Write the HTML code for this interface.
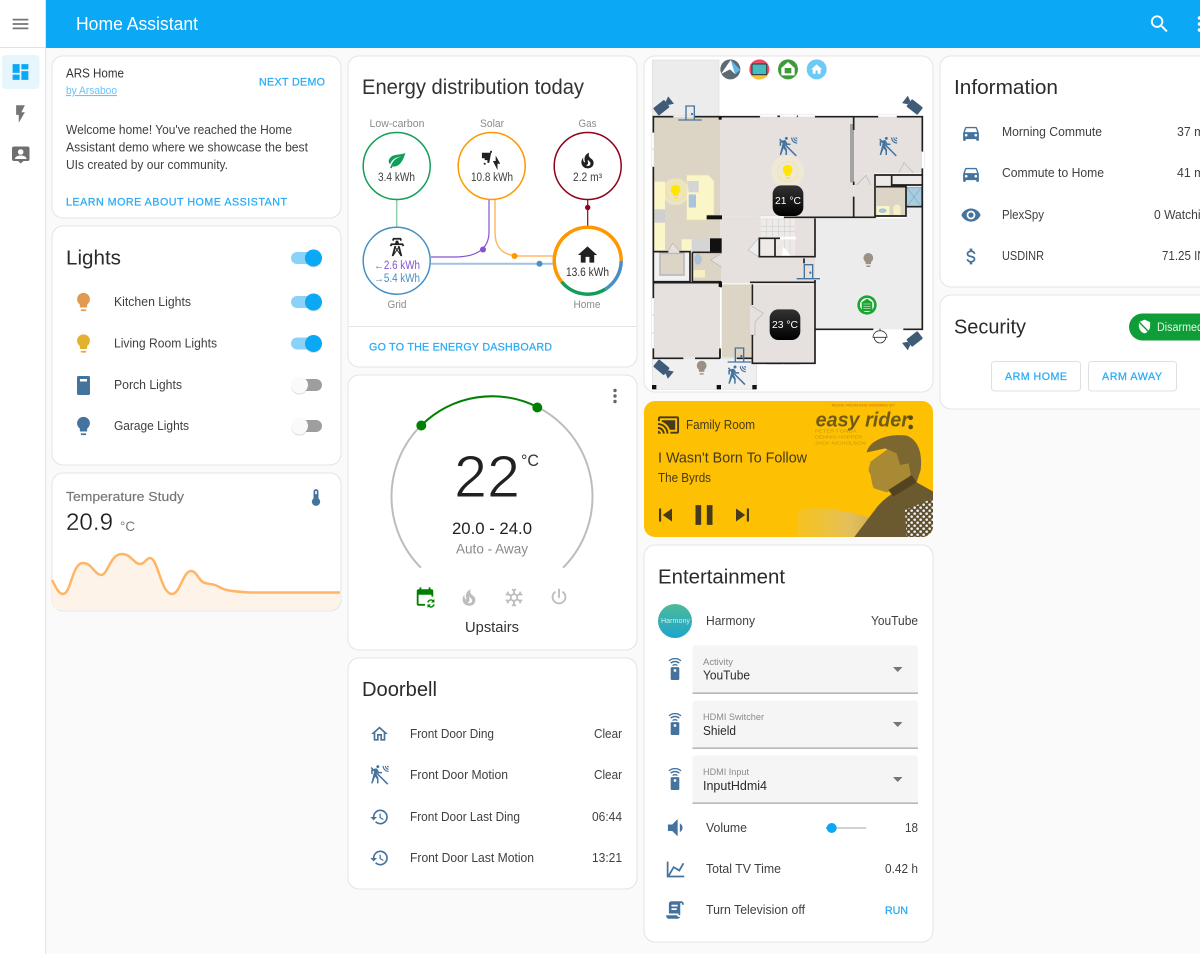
<!DOCTYPE html>
<html lang="en"><head><meta charset="utf-8"><title>Home Assistant</title>
<style>
html,body{margin:0;padding:0;background:#fafafa;width:1200px;height:954px;overflow:hidden}
svg{display:block}
text{font-family:"Liberation Sans",sans-serif;fill:#3f3f3f;font-size:13px;white-space:pre}
.t{font-size:20.5px;fill:#2b2b2b}
.b{fill:#29abf5;stroke:#29abf5;stroke-width:.25;font-size:10.7px}
.l{font-size:10.8px;fill:#8c8c8c}
.m{fill:#453a1c}
.c{fill:#fff;stroke:#e4e4e4;stroke-width:1}
</style></head><body>
<svg xmlns="http://www.w3.org/2000/svg" width="1200" height="954" viewBox="0 0 1200 954">
<defs>
<symbol id="menu" viewBox="0 0 24 24"><path d="M3,6H21V8H3V6M3,11H21V13H3V11M3,16H21V18H3V16Z"/></symbol>
<symbol id="search" viewBox="0 0 24 24"><path d="M9.5,3A6.5,6.5 0 0,1 16,9.5C16,11.11 15.41,12.59 14.44,13.73L14.71,14H15.5L20.5,19L19,20.5L14,15.5V14.71L13.73,14.44C12.59,15.41 11.11,16 9.5,16A6.5,6.5 0 0,1 3,9.5A6.5,6.5 0 0,1 9.5,3M9.5,5C7,5 5,7 5,9.5C5,12 7,14 9.5,14C12,14 14,12 14,9.5C14,7 12,5 9.5,5Z"/></symbol>
<symbol id="dash" viewBox="0 0 24 24"><path d="M13,3V9H21V3M13,21H21V11H13M3,21H11V15H3M3,13H11V3H3V13Z"/></symbol>
<symbol id="flash" viewBox="0 0 24 24"><path d="M7,2V13H10V22L17,10H13L17,2H7Z"/></symbol>
<symbol id="bulb" viewBox="0 0 24 24"><path d="M12,2A7,7 0 0,0 5,9C5,11.38 6.19,13.47 8,14.74V17A1,1 0 0,0 9,18H15A1,1 0 0,0 16,17V14.74C17.81,13.47 19,11.38 19,9A7,7 0 0,0 12,2M9,21A1,1 0 0,0 10,22H14A1,1 0 0,0 15,21V20H9V21Z"/></symbol>
<symbol id="home" viewBox="0 0 24 24"><path d="M10,20V14H14V20H19V12H22L12,3L2,12H5V20H10Z"/></symbol>
<symbol id="homeo" viewBox="0 0 24 24"><path d="M12 5.69L17 10.19V18H15V12H9V18H7V10.19L12 5.69M12 3L2 12H5V20H11V14H13V20H19V12H22L12 3Z"/></symbol>
<symbol id="car" viewBox="0 0 24 24"><path d="M5,11L6.5,6.5H17.5L19,11M17.5,16A1.5,1.5 0 0,1 16,14.5A1.5,1.5 0 0,1 17.5,13A1.5,1.5 0 0,1 19,14.5A1.5,1.5 0 0,1 17.5,16M6.5,16A1.5,1.5 0 0,1 5,14.5A1.5,1.5 0 0,1 6.5,13A1.5,1.5 0 0,1 8,14.5A1.5,1.5 0 0,1 6.5,16M18.92,6C18.72,5.42 18.16,5 17.5,5H6.5C5.84,5 5.28,5.42 5.08,6L3,12V20A1,1 0 0,0 4,21H5A1,1 0 0,0 6,20V19H18V20A1,1 0 0,0 19,21H20A1,1 0 0,0 21,20V12L18.92,6Z"/></symbol>
<symbol id="eye" viewBox="0 0 24 24"><path d="M12,9A3,3 0 0,0 9,12A3,3 0 0,0 12,15A3,3 0 0,0 15,12A3,3 0 0,0 12,9M12,17A5,5 0 0,1 7,12A5,5 0 0,1 12,7A5,5 0 0,1 17,12A5,5 0 0,1 12,17M12,4.5C7,4.5 2.73,7.61 1,12C2.73,16.39 7,19.5 12,19.5C17,19.5 21.27,16.39 23,12C21.27,7.61 17,4.5 12,4.5Z"/></symbol>
<symbol id="usd" viewBox="0 0 24 24"><path d="M7,15H9C9,16.08 10.37,17 12,17C13.63,17 15,16.08 15,15C15,13.9 13.96,13.5 11.76,12.97C9.64,12.44 7,11.78 7,9C7,7.21 8.47,5.69 10.5,5.18V3H13.5V5.18C15.53,5.69 17,7.21 17,9H15C15,7.92 13.63,7 12,7C10.37,7 9,7.92 9,9C9,10.1 10.04,10.5 12.24,11.03C14.36,11.56 17,12.22 17,15C17,16.79 15.53,18.31 13.5,18.82V21H10.5V18.82C8.47,18.31 7,16.79 7,15Z"/></symbol>
<symbol id="hist" viewBox="0 0 24 24"><path d="M13.5,8H12V13L16.28,15.54L17,14.33L13.5,12.25V8M13,3A9,9 0 0,0 4,12H1L4.96,16.03L9,12H6A7,7 0 0,1 13,5A7,7 0 0,1 20,12A7,7 0 0,1 13,19C11.07,19 9.32,18.21 8.06,16.94L6.64,18.36C8.27,20 10.5,21 13,21A9,9 0 0,0 22,12A9,9 0 0,0 13,3"/></symbol>
<symbol id="therm" viewBox="0 0 24 24"><path d="M15 13V5A3 3 0 0 0 9 5V13A5 5 0 1 0 15 13M12 4A1 1 0 0 1 13 5V8H11V5A1 1 0 0 1 12 4Z"/></symbol>
<symbol id="fire" viewBox="0 0 24 24"><path d="M17.66 11.2C17.43 10.9 17.15 10.64 16.89 10.38C16.22 9.78 15.46 9.35 14.82 8.72C13.33 7.26 13 4.85 13.95 3C13 3.23 12.17 3.75 11.46 4.32C8.87 6.4 7.85 10.07 9.07 13.22C9.11 13.32 9.15 13.42 9.15 13.55C9.15 13.77 9 13.97 8.8 14.05C8.57 14.15 8.33 14.09 8.14 13.93C8.08 13.88 8.04 13.83 8 13.76C6.87 12.33 6.69 10.28 7.45 8.64C5.78 10 4.87 12.3 5 14.47C5.06 14.97 5.12 15.47 5.29 15.97C5.43 16.57 5.7 17.17 6 17.7C7.08 19.43 8.95 20.67 10.96 20.92C13.1 21.19 15.39 20.8 17.03 19.32C18.86 17.66 19.5 15 18.56 12.72L18.43 12.46C18.22 12 17.66 11.2 17.66 11.2M14.5 17.5C14.22 17.74 13.76 18 13.4 18.1C12.28 18.5 11.16 17.94 10.5 17.28C11.69 17 12.4 16.12 12.61 15.23C12.78 14.43 12.46 13.77 12.33 13C12.21 12.26 12.23 11.63 12.5 10.94C12.69 11.32 12.89 11.7 13.13 12C13.9 13 15.11 13.44 15.37 14.8C15.41 14.94 15.43 15.08 15.43 15.23C15.46 16.05 15.1 16.95 14.5 17.5H14.5Z"/></symbol>
<symbol id="leaf" viewBox="0 0 24 24"><path d="M17,8C8,10 5.9,16.17 3.82,21.34L5.71,22L6.66,19.7C7.14,19.87 7.64,20 8,20C19,20 22,3 22,3C21,5 14,5.25 9,6.25C4,7.25 2,11.5 2,13.5C2,15.5 3.75,17.25 3.75,17.25C7,8 17,8 17,8Z"/></symbol>
<symbol id="power" viewBox="0 0 24 24"><path d="M16.56,5.44L15.11,6.89C16.84,7.94 18,9.83 18,12A6,6 0 0,1 12,18A6,6 0 0,1 6,12C6,9.83 7.16,7.94 8.88,6.88L7.44,5.44C5.36,6.88 4,9.28 4,12A8,8 0 0,0 12,20A8,8 0 0,0 20,12C20,9.28 18.64,6.88 16.56,5.44M13,3H11V13H13"/></symbol>
<symbol id="snow" viewBox="0 0 24 24"><path d="M20.79,13.95L18.46,14.57L16.46,13.44V10.56L18.46,9.43L20.79,10.05L21.31,8.12L19.54,7.65L20,5.88L18.07,5.36L17.45,7.69L15.45,8.82L13,7.38V5.12L14.71,3.41L13.29,2L12,3.29L10.71,2L9.29,3.41L11,5.12V7.38L8.5,8.82L6.5,7.69L5.92,5.36L4,5.88L4.47,7.65L2.7,8.12L3.22,10.05L5.55,9.43L7.55,10.56V13.45L5.55,14.58L3.22,13.96L2.7,15.89L4.47,16.36L4,18.12L5.93,18.64L6.55,16.31L8.55,15.18L11,16.62V18.88L9.29,20.59L10.71,22L12,20.71L13.29,22L14.7,20.59L13,18.88V16.62L15.5,15.17L17.5,16.3L18.12,18.63L20,18.12L19.53,16.35L21.3,15.88L20.79,13.95M9.5,10.56L12,9.11L14.5,10.56V13.44L12,14.89L9.5,13.44V10.56Z"/></symbol>
<symbol id="tower" viewBox="0 0 24 24"><path d="M8.28,5.45L6.5,4.55L7.76,2H16.23L17.5,4.55L15.72,5.44L15,4H9L8.28,5.45M18.62,8H14.09L13.3,5H10.7L9.91,8H5.38L4.1,10.55L5.89,11.44L6.62,10H17.38L18.1,11.45L19.89,10.56L18.62,8M17.77,22H15.7L15.46,21.1L12,15.9L8.53,21.1L8.3,22H6.23L9.12,11H11.19L10.83,12.35L12,14.1L13.16,12.35L12.81,11H14.88L17.77,22M11.4,15L10.5,13.65L9.32,18.13L11.4,15M14.68,18.12L13.5,13.64L12.6,15L14.68,18.12Z"/></symbol>
<symbol id="prev" viewBox="0 0 24 24"><path d="M6,18V6H8V18H6M9.5,12L18,6V18L9.5,12Z"/></symbol>
<symbol id="next" viewBox="0 0 24 24"><path d="M16,18H18V6H16M6,18L14.5,12L6,6V18Z"/></symbol>
<symbol id="pause" viewBox="0 0 24 24"><path d="M14,19H18V5H14M6,19H10V5H6V19Z"/></symbol>
<symbol id="cast" viewBox="0 0 24 24"><path d="M21,3H3C1.89,3 1,3.89 1,5V8H3V5H21V19H14V21H21A2,2 0 0,0 23,19V5C23,3.89 22.1,3 21,3M1,10V12A9,9 0 0,1 10,21H12C12,14.92 7.07,10 1,10M19,7H5V8.63C8.96,9.91 12.09,13.04 13.37,17H19M1,14V16A5,5 0 0,1 6,21H8A7,7 0 0,0 1,14M1,18V21H4A3,3 0 0,0 1,18Z"/></symbol>
<symbol id="vol" viewBox="0 0 24 24"><path d="M5,9V15H9L14,20V4L9,9M18.5,12C18.5,10.23 17.5,8.71 16,7.97V16C17.5,15.29 18.5,13.76 18.5,12Z"/></symbol>
<symbol id="chart" viewBox="0 0 24 24"><path d="M16,11.78L20.24,4.45L21.97,5.45L16.74,14.5L10.23,10.75L5.46,19H22V21H2V3H4V17.54L9.5,8L16,11.78Z"/></symbol>
<symbol id="script" viewBox="0 0 24 24"><path d="M17.8,20C17.4,21.2 16.3,22 15,22H5C3.3,22 2,20.7 2,19V18H5L14.2,18C14.6,19.2 15.7,20 17,20H17.8M19,2C20.7,2 22,3.3 22,5V6H20V5C20,4.4 19.6,4 19,4C18.4,4 18,4.4 18,5V18H17C16.4,18 16,17.6 16,17V16H5V5C5,3.3 6.3,2 8,2H19M8,6V8H15V6H8M8,10V12H14V10H8Z"/></symbol>
<symbol id="motion" viewBox="0 0 24 24"><path d="M10 .2C9 .2 8.2 1 8.2 2S9 3.8 10 3.8 11.8 3 11.8 2 11 .2 10 .2M15.67 1A7.33 7.33 0 0 0 23 8.33V7A6 6 0 0 1 17 1H15.67M18.33 1C18.33 3.58 20.42 5.67 23 5.67V4.33C21.16 4.33 19.67 2.84 19.67 1H18.33M21 1A2 2 0 0 0 23 3V1H21M7.92 4.03C7.75 4.03 7.58 4.06 7.42 4.11L2 5.8V11H3.8V7.33L5.91 6.67L2 22H3.8L6.67 13.89L9 17V22H10.8V15.59L8.31 11.05L9.04 8.18L10.12 10H15V8.2H11.38L9.38 4.87C9.08 4.37 8.54 4.03 7.92 4.03Z"/><path d="M1.3 3.7L2.6 2.4L22.6 22.4L21.3 23.7Z"/></symbol>
<symbol id="remote" viewBox="0 0 24 24"><rect x="7.500" y="9.500" width="9" height="13.500" rx="1.200"/><circle cx="12" cy="13" r="1.400" fill="#fff"/><path d="M9,7.400A4.500,4.500 0 0 1 15,7.400L14,8.400A3,3 0 0 0 10,8.400Z"/><path d="M7,4.800A7.500,7.500 0 0 1 17,4.800L16,5.900A6,6 0 0 0 8,5.900Z"/><path d="M5.300,2.500A10,10 0 0 1 18.700,2.500L17.700,3.500A8.500,8.500 0 0 0 6.300,3.500Z"/></symbol>
<symbol id="cal" viewBox="0 0 24 24"><path d="M19 3h-1V1h-2v2H8V1H6v2H5a2 2 0 0 0-2 2v14a2 2 0 0 0 2 2h7v-2H5V9h14v2h2V5a2 2 0 0 0-2-2z"/><path d="M14.500 17.500a4 4 0 0 1 6.600-2.600l1.200-1.200v3.800h-3.800l1.500-1.500a2.400 2.400 0 0 0-3.900 1.500zM22.500 19.500a4 4 0 0 1-6.600 2.600l-1.200 1.200v-3.800h3.800l-1.500 1.500a2.400 2.400 0 0 0 3.900-1.500z"/></symbol>
<symbol id="shield" viewBox="0 0 24 24"><path d="M12,1L3,5V11C3,16.55 6.84,21.74 12,23C17.16,21.74 21,16.55 21,11V5L12,1Z"/></symbol>
<symbol id="solar" viewBox="0 0 24 24"><path d="M1,3H11L9,14H7V11H4V9H1ZM12,1V3H10V1ZM3,14H5V16H3Z"/><path d="M17,7V13H14L19,23V16H22L17,7Z" transform="translate(-1 -1)"/></symbol>
<clipPath id="mc"><rect x="644" y="401" width="289" height="136" rx="11"/></clipPath>
<linearGradient id="hg" x1="0" y1="0" x2="0" y2="1"><stop offset="0" stop-color="#4dba98"/><stop offset="1" stop-color="#1ea5cf"/></linearGradient>
<linearGradient id="tg" x1="0" y1="0" x2="0" y2="1"><stop offset="0" stop-color="#333"/><stop offset="1" stop-color="#000"/></linearGradient>
<linearGradient id="sg" x1="0" y1="0" x2="1" y2="0"><stop offset="0" stop-color="#e9c650" stop-opacity=".35"/><stop offset=".6" stop-color="#e2bf5c"/><stop offset="1" stop-color="#c9a548"/></linearGradient>
<pattern id="dots" width="18" height="18" patternUnits="userSpaceOnUse"><rect width="18" height="18" fill="#5f5030"/><circle cx="5" cy="5" r="4" fill="#eee"/><circle cx="14" cy="14" r="4" fill="#eee"/></pattern>
<g id="door" fill="none" stroke="#44739e" stroke-width="4"><path d="M-35,0H35"/><path d="M-12,0V-42H13V0"/><circle cx="6" cy="-18" r="1.5" fill="#44739e"/></g>
<g id="camera" fill="#3f5b78"><rect x="-26" y="-14" width="42" height="28" rx="3"/><path d="M16,-6L32,-14V14L16,6Z"/></g>
</defs>

<rect width="1200" height="954" fill="#fafafa"/>
<!-- sidebar -->
<rect x="0" y="0" width="45" height="954" fill="#fff"/>
<rect x="45" y="0" width="1" height="954" fill="#e2e2e2"/>
<rect x="0" y="47" width="45" height="1" fill="#e2e2e2"/>
<use href="#menu" x="10" y="13" width="21" height="22" fill="#757575"/>
<rect x="2" y="55" width="37.500" height="34" rx="4" fill="#e7f5fd"/>
<use href="#dash" x="10" y="61.500" width="21" height="21" fill="#0ba8f5"/>
<use href="#flash" x="10" y="103.500" width="21" height="21" fill="#757575"/>
<path d="M14,146.500H27.500A2,2 0 0 1 29.500,148.500V159A2,2 0 0 1 27.500,161H23.500L20.700,163.500L18,161H14A2,2 0 0 1 12,159V148.500A2,2 0 0 1 14,146.500Z" fill="#6f6f6f"/>
<circle cx="20.700" cy="152" r="2.800" fill="#fff"/><path d="M15,159C15,156.500 18,155.500 20.700,155.500C23.500,155.500 26.500,156.500 26.500,159Z" fill="#fff"/>
<!-- header -->
<rect x="46" y="0" width="1154" height="48" fill="#0ba8f5"/>
<text x="76" y="30" lengthAdjust="spacingAndGlyphs" textLength="122" style="fill:#fff;font-size:18px">Home Assistant</text>
<use href="#search" x="1148" y="12.500" width="23" height="23" fill="#fff"/>
<circle cx="1199.500" cy="18" r="1.800" fill="#fff"/><circle cx="1199.500" cy="24" r="1.800" fill="#fff"/><circle cx="1199.500" cy="30" r="1.800" fill="#fff"/>

<!-- cards -->
<rect class="c" x="52" y="56" width="289" height="162" rx="11"/>
<rect class="c" x="52" y="226" width="289" height="239" rx="11"/>
<rect class="c" x="52" y="473" width="289" height="138" rx="11"/>
<rect class="c" x="348" y="56" width="289" height="311" rx="11"/>
<rect class="c" x="348" y="375" width="289" height="275" rx="11"/>
<rect class="c" x="348" y="658" width="289" height="231" rx="11"/>
<rect class="c" x="644" y="56" width="289" height="336" rx="11"/>
<rect class="c" x="644" y="545" width="289" height="397" rx="11"/>
<rect class="c" x="940" y="56" width="300" height="231" rx="11"/>
<rect class="c" x="940" y="295" width="300" height="114" rx="11"/>

<!-- demo card -->
<text x="66" y="77.500" lengthAdjust="spacingAndGlyphs" textLength="58" style="fill:#333">ARS Home</text>
<text x="66" y="94" lengthAdjust="spacingAndGlyphs" textLength="51" style="font-size:10.800px;fill:#6cc3f6;text-decoration:underline">by Arsaboo</text>
<text class="b" x="259" y="85.500" textLength="66">NEXT DEMO</text>
<text x="66" y="134" lengthAdjust="spacingAndGlyphs" textLength="226">Welcome home! You've reached the Home</text>
<text x="66" y="151.500" lengthAdjust="spacingAndGlyphs" textLength="242">Assistant demo where we showcase the best</text>
<text x="66" y="169" lengthAdjust="spacingAndGlyphs" textLength="162">UIs created by our community.</text>
<text class="b" x="66" y="205.500" textLength="221">LEARN MORE ABOUT HOME ASSISTANT</text>

<!-- lights -->
<text class="t" x="66" y="264.500" lengthAdjust="spacingAndGlyphs" textLength="55">Lights</text>
<g>
<rect x="291" y="252" width="30" height="12" rx="6" fill="#8bd2f9"/><circle cx="313.500" cy="259" r="8.500" fill="#000" opacity=".12"/><circle cx="313.500" cy="258" r="8.500" fill="#0ba8f5"/>
<rect x="291" y="296" width="30" height="12" rx="6" fill="#8bd2f9"/><circle cx="313.500" cy="303" r="8.500" fill="#000" opacity=".12"/><circle cx="313.500" cy="302" r="8.500" fill="#0ba8f5"/>
<rect x="291" y="337.500" width="30" height="12" rx="6" fill="#8bd2f9"/><circle cx="313.500" cy="344.500" r="8.500" fill="#000" opacity=".12"/><circle cx="313.500" cy="343.500" r="8.500" fill="#0ba8f5"/>
<rect x="292" y="379" width="30" height="12" rx="6" fill="#9e9e9e"/><circle cx="299.500" cy="386" r="8.500" fill="#000" opacity=".15"/><circle cx="299.500" cy="385" r="8.500" fill="#fafafa"/>
<rect x="292" y="420" width="30" height="12" rx="6" fill="#9e9e9e"/><circle cx="299.500" cy="427" r="8.500" fill="#000" opacity=".15"/><circle cx="299.500" cy="426" r="8.500" fill="#fafafa"/>
</g>
<use href="#bulb" x="72.500" y="291" width="22" height="22" fill="#e29a50"/>
<use href="#bulb" x="72.500" y="332.500" width="22" height="22" fill="#e3b12d"/>
<rect x="77" y="376" width="13" height="19" rx="1.500" fill="#44739e"/><rect x="80" y="379" width="7" height="2.500" fill="#fff"/>
<use href="#bulb" x="72.500" y="415" width="22" height="22" fill="#44739e"/>
<text x="114" y="306" lengthAdjust="spacingAndGlyphs" textLength="77">Kitchen Lights</text>
<text x="114" y="347.500" lengthAdjust="spacingAndGlyphs" textLength="103">Living Room Lights</text>
<text x="114" y="389" lengthAdjust="spacingAndGlyphs" textLength="68">Porch Lights</text>
<text x="114" y="430" lengthAdjust="spacingAndGlyphs" textLength="75">Garage Lights</text>

<!-- temperature -->
<text x="66" y="501" lengthAdjust="spacingAndGlyphs" textLength="118" style="fill:#757575;stroke:#757575;stroke-width:.15">Temperature Study</text>
<text x="66" y="530" lengthAdjust="spacingAndGlyphs" textLength="47" style="font-size:24px;fill:#212121;stroke:#fff;stroke-width:.3">20.9</text>
<text x="120" y="531" lengthAdjust="spacingAndGlyphs" textLength="15" style="font-size:14px;fill:#757575">°C</text>
<use href="#therm" x="306" y="487.500" width="20" height="20" fill="#44739e"/>
<path d="M52,580C56,588 59,594 63,594C71,594 72,563 83,563C92,563 95,575 101,575C108,575 110,554 122,554C131,554 134,564 140,564C145,564 146,558 150,558C158,558 161,594 172,594C180,594 183,571 191,571C197,571 199,582 205,583C209,584 212,584 215,585C220,587 222,589 227,590C235,592 245,592 252,592.500H340V600Q340,610 330,610H62Q52,610 52,600Z" fill="#fdf3e8"/>
<path d="M52,580C56,588 59,594 63,594C71,594 72,563 83,563C92,563 95,575 101,575C108,575 110,554 122,554C131,554 134,564 140,564C145,564 146,558 150,558C158,558 161,594 172,594C180,594 183,571 191,571C197,571 199,582 205,583C209,584 212,584 215,585C220,587 222,589 227,590C235,592 245,592 252,592.500H340" fill="none" stroke="#ffb566" stroke-width="2.500"/>

<!-- energy -->
<text x="362" y="94" lengthAdjust="spacingAndGlyphs" textLength="222" style="font-size:21px;fill:#333">Energy distribution today</text>
<g fill="none">
<path d="M396.700,200V227" stroke="#8fd0ab" stroke-width="1.500"/>
<path d="M587.700,200V227" stroke="#8e021b" stroke-width="1.200"/>
<path d="M489,200V232C489,250 475,257 455,257H431" stroke="#8353d1" stroke-width="1.200"/>
<path d="M495,200V232C495,250 505,256 520,256H554" stroke="#ffb866" stroke-width="1.500"/>
<path d="M431,263.700H554" stroke="#9fc4e0" stroke-width="2"/>
<circle cx="396.700" cy="166" r="33.500" stroke="#129e58" stroke-width="1.500"/>
<circle cx="491.700" cy="166" r="33.500" stroke="#ff9800" stroke-width="1.500"/>
<circle cx="587.700" cy="166" r="33.500" stroke="#8e021b" stroke-width="1.500"/>
<circle cx="396.700" cy="260.700" r="33.500" stroke="#488fc2" stroke-width="1.500"/>
<path d="M587.700,227.200A33.500,33.500 0 0 1 621.200,260.700" stroke="#ff9800" stroke-width="3.500"/>
<path d="M561.700,281.800A33.500,33.500 0 0 1 587.700,227.200" stroke="#ff9800" stroke-width="3.500"/>
<path d="M621.200,260.700A33.500,33.500 0 0 1 605.400,289.100" stroke="#488fc2" stroke-width="3.500"/>
<path d="M605.400,289.100A33.500,33.500 0 0 1 561.700,281.800" stroke="#129e58" stroke-width="3.500"/>
</g>
<circle cx="587.700" cy="207.500" r="2.700" fill="#8e021b"/>
<circle cx="483" cy="249.500" r="3" fill="#8353d1"/>
<circle cx="514.500" cy="256" r="3" fill="#ff9800"/>
<circle cx="539.500" cy="263.700" r="3" fill="#488fc2"/>
<text class="l" x="369.500" y="127" lengthAdjust="spacingAndGlyphs" textLength="55">Low-carbon</text>
<text class="l" x="480" y="127" lengthAdjust="spacingAndGlyphs" textLength="24">Solar</text>
<text class="l" x="578.500" y="127" lengthAdjust="spacingAndGlyphs" textLength="18">Gas</text>
<text class="l" x="387.500" y="308" lengthAdjust="spacingAndGlyphs" textLength="19">Grid</text>
<text class="l" x="573.500" y="308" lengthAdjust="spacingAndGlyphs" textLength="27">Home</text>
<text x="378" y="181" lengthAdjust="spacingAndGlyphs" textLength="37" style="font-size:11.500px">3.4 kWh</text>
<text x="471" y="181" lengthAdjust="spacingAndGlyphs" textLength="42" style="font-size:11.500px">10.8 kWh</text>
<text x="573" y="181" lengthAdjust="spacingAndGlyphs" textLength="29" style="font-size:11.500px">2.2 m³</text>
<text x="374" y="269" lengthAdjust="spacingAndGlyphs" textLength="46" style="font-size:11.500px;fill:#8353d1">←2.6 kWh</text>
<text x="374" y="282" lengthAdjust="spacingAndGlyphs" textLength="46" style="font-size:11.500px;fill:#488fc2">→5.4 kWh</text>
<text x="566" y="276" lengthAdjust="spacingAndGlyphs" textLength="43" style="font-size:11.500px;fill:#333">13.6 kWh</text>
<use href="#leaf" x="387" y="150" width="20" height="20" fill="#129e58"/>
<use href="#solar" x="481" y="150" width="22" height="22" fill="#212121"/>
<use href="#fire" x="577" y="150" width="21" height="21" fill="#212121"/>
<use href="#tower" x="386" y="236" width="22" height="22" fill="#212121"/>
<use href="#home" x="576" y="243.500" width="23" height="23" fill="#212121"/>
<rect x="349" y="326" width="287" height="1" fill="#e4e4e4"/>
<text class="b" x="369" y="350.500" textLength="183">GO TO THE ENERGY DASHBOARD</text>

<!-- thermostat -->
<path d="M420.900,567.700A100.500,100.500 0 1 1 563.100,567.700" fill="none" stroke="#bdbdbd" stroke-width="2"/>
<path d="M421.300,425.500A100.500,100.500 0 0 1 537.300,407" fill="none" stroke="#008000" stroke-width="2"/>
<circle cx="421.300" cy="425.500" r="5" fill="#008000"/><circle cx="537.300" cy="407.500" r="5" fill="#008000"/>
<circle cx="615" cy="390.500" r="1.700" fill="#666"/><circle cx="615" cy="396" r="1.700" fill="#666"/><circle cx="615" cy="401.500" r="1.700" fill="#666"/>
<text x="454" y="497" lengthAdjust="spacingAndGlyphs" textLength="66" style="font-size:59px;fill:#212121;stroke:#fff;stroke-width:1">22</text>
<text x="521" y="466" lengthAdjust="spacingAndGlyphs" textLength="18" style="font-size:17px;fill:#333">°C</text>
<text x="452" y="534" lengthAdjust="spacingAndGlyphs" textLength="80" style="font-size:16.500px;fill:#212121">20.0 - 24.0</text>
<text x="456" y="553.500" lengthAdjust="spacingAndGlyphs" textLength="72" style="font-size:14px;fill:#8a8a8a">Auto - Away</text>
<use href="#cal" x="414" y="586.500" width="22" height="22" fill="#008000"/>
<use href="#fire" x="458" y="586.500" width="22" height="22" fill="#bdbdbd"/>
<use href="#snow" x="503" y="586.500" width="22" height="22" fill="#bdbdbd"/>
<use href="#power" x="548" y="586" width="22" height="22" fill="#bdbdbd"/>
<text x="465" y="632" lengthAdjust="spacingAndGlyphs" textLength="54" style="font-size:14.500px;fill:#333">Upstairs</text>

<!-- doorbell -->
<text class="t" x="362" y="696" lengthAdjust="spacingAndGlyphs" textLength="75">Doorbell</text>
<use href="#homeo" x="369.500" y="724" width="20" height="20" fill="#44739e"/>
<use href="#motion" x="369.500" y="765" width="20" height="20" fill="#44739e"/>
<use href="#hist" x="369.500" y="807" width="20" height="20" fill="#44739e"/>
<use href="#hist" x="369.500" y="848" width="20" height="20" fill="#44739e"/>
<text x="410" y="738" lengthAdjust="spacingAndGlyphs" textLength="84">Front Door Ding</text>
<text x="410" y="779" lengthAdjust="spacingAndGlyphs" textLength="98">Front Door Motion</text>
<text x="410" y="821" lengthAdjust="spacingAndGlyphs" textLength="110">Front Door Last Ding</text>
<text x="410" y="862" lengthAdjust="spacingAndGlyphs" textLength="124">Front Door Last Motion</text>
<text x="594" y="738" lengthAdjust="spacingAndGlyphs" textLength="28">Clear</text>
<text x="594" y="779" lengthAdjust="spacingAndGlyphs" textLength="28">Clear</text>
<text x="592" y="821" lengthAdjust="spacingAndGlyphs" textLength="30">06:44</text>
<text x="592" y="862" lengthAdjust="spacingAndGlyphs" textLength="30">13:21</text>

<!-- floorplan -->
<g transform="translate(640 50) scale(.33333)">
<rect x="37" y="30" width="200" height="167" fill="#ececec" stroke="#ddd" stroke-width="2"/>
<rect x="37" y="925" width="313" height="93" fill="#f0f0f0" stroke="#ccc" stroke-width="2" stroke-dasharray="5 3"/>
<rect x="40" y="200" width="200" height="405" fill="#dcd5c5"/>
<rect x="240" y="200" width="400" height="300" fill="#e6e1de"/>
<rect x="640" y="200" width="207" height="170" fill="#e6e1de"/>
<rect x="640" y="370" width="65" height="130" fill="#e6e1de"/>
<rect x="240" y="500" width="285" height="200" fill="#e6e1de"/>
<path d="M525,505H800V470H847V838H525Z" fill="#ececec"/>
<rect x="40" y="698" width="200" height="225" fill="#e6e1de"/>
<rect x="245" y="703" width="88" height="220" fill="#dcd5c5"/>
<rect x="337" y="703" width="188" height="236" fill="#e6e1de"/>
<rect x="40" y="605" width="110" height="90" fill="#f1f1f1"/>
<path d="M60,610H132V675H60Z" fill="#dcd5c5" stroke="#bbb" stroke-width="5"/>
<rect x="157" y="607" width="86" height="86" fill="#dcd5c5"/>
<rect x="708" y="410" width="90" height="88" fill="#dcd5c5"/>
<rect x="708" y="372" width="140" height="38" fill="#eeeae8"/>
<rect x="800" y="412" width="44" height="58" fill="#a9cde0" stroke="#7fa9c0" stroke-width="2"/>
<path d="M800,412L844,470M844,412L800,470" stroke="#7fa9c0" stroke-width="2"/>
<!-- counters -->
<rect x="43" y="395" width="32" height="205" fill="#fbf6c8"/>
<rect x="43" y="478" width="33" height="40" fill="#cfcfcf"/>
<path d="M140,375H205L222,392V495H200V510H140Z" fill="#fbf6c8" stroke="#e6e0b0" stroke-width="2"/>
<rect x="142" y="393" width="34" height="34" fill="#d5d5d5"/>
<rect x="146" y="433" width="22" height="40" rx="3" fill="#a9c5dd"/>
<rect x="125" y="568" width="32" height="33" fill="#fbf6c8"/>
<rect x="155" y="565" width="55" height="38" fill="#d5d5d5"/>
<rect x="210" y="565" width="35" height="40" fill="#111"/>
<rect x="200" y="496" width="46" height="12" fill="#111"/>
<rect x="710" y="468" width="38" height="28" fill="#fbf6c8"/>
<ellipse cx="728" cy="482" rx="12" ry="7" fill="#a9c5dd"/>
<path d="M760,495V475C760,460 782,460 782,475V495Z" fill="#f4efc4"/>
<path d="M160,660H195V683H160Z" fill="#f4efc4"/><ellipse cx="174" cy="628" rx="10" ry="15" fill="#a9c5dd" stroke="#bbb" stroke-width="2"/>
<rect x="630" y="222" width="12" height="175" fill="#a3a3a3"/>
<!-- stairs -->
<path d="M362,505H465V618H362Z" fill="#eeeae8"/>
<path d="M362,530H465M362,545H465M380,505V560M398,505V560M416,505V560M434,505V618M450,505V618" stroke="#c9c9c9" stroke-width="1.500" fill="none"/>
<rect x="360" y="497" width="70" height="10" fill="#f4f4f4" stroke="#ccc"/>
<rect x="420" y="560" width="48" height="8" fill="#fff"/>
<path d="M430,590L455,620H425Z" fill="#fff"/>
<path d="M355,565L325,600L355,620" fill="#eee" stroke="#bbb" stroke-width="2"/>
<!-- door swings -->
<g fill="#e6e1de" stroke="#b5b5b5" stroke-width="2"><path d="M330,765L370,790L345,815L345,855L330,855"/><path d="M650,405L678,376L692,405"/><path d="M777,368L792,338L820,368"/><path d="M85,602L98,580L118,602"/><path d="M245,652L212,630L245,610"/></g>
<!-- walls -->
<g fill="none" stroke="#1f1f1f" stroke-width="5">
<path d="M40,248V200H100M165,200H360M525,200H715M770,200H847V305M847,355V838H790M700,838H525"/>
<path d="M40,350V745M40,895V925H130M165,925H240M240,900V925M290,925H337"/>
<path d="M412,199H420M470,199H474"/>
<path d="M641,200V240M641,395V405M641,440V500M432,502H705V375H847M755,375V405H847M708,410H798V498H705M798,498V470H847"/>
<path d="M525,505V620H358V565H420"/>
<path d="M405,565V620"/>
<path d="M40,605H85M118,605H150V695H40M157,607H245M157,607V695H243M243,695V712"/>
<path d="M40,698H240M240,895V925"/>
<path d="M330,697H525V940H337V855M337,765V703"/>
<path d="M492,625V640M525,695V690"/>
<path d="M380,940H425M433,940H480"/>
</g>
<rect x="236" y="200" width="9" height="9" fill="#111"/>
<rect x="236" y="695" width="10" height="16" fill="#111"/>
<rect x="36" y="1005" width="13" height="13" fill="#111"/><rect x="230" y="1005" width="13" height="13" fill="#111"/><rect x="337" y="1005" width="13" height="13" fill="#111"/>
<g fill="#fff" stroke="#ccc" stroke-width="1"><rect x="34" y="248" width="8" height="48"/><rect x="34" y="300" width="8" height="50"/><rect x="34" y="745" width="8" height="48"/><rect x="34" y="797" width="8" height="50"/><rect x="34" y="850" width="8" height="45"/><rect x="845" y="305" width="8" height="50"/><rect x="360" y="194" width="52" height="7"/><rect x="420" y="194" width="50" height="7"/><rect x="474" y="194" width="50" height="7"/><rect x="715" y="194" width="55" height="7"/></g>
<!-- round icons -->
<circle cx="271" cy="58" r="30" fill="#5e6a72"/><path d="M243,72L272,30L300,60L285,72L270,58Z" fill="#fff"/><path d="M272,30L300,60L285,72Z" fill="#5fb7e8"/>
<circle cx="358" cy="58" r="30" fill="#ef4a68"/><rect x="336" y="42" width="44" height="32" rx="3" fill="#45bcc0" stroke="#333" stroke-width="3"/><path d="M333,76H383A30,30 0 0 1 358,88A30,30 0 0 1 333,76Z" fill="#f5c33b"/>
<circle cx="444" cy="58" r="30" fill="#3f9a3c"/><path d="M444,36L424,54V76H464V54Z" fill="#fff"/><rect x="434" y="54" width="20" height="16" fill="#3f9a3c"/>
<circle cx="530" cy="58" r="30" fill="#6ccaf5"/><use href="#home" x="510" y="38" width="40" height="40" fill="#fff"/>
<!-- cameras -->
<use href="#camera" transform="translate(68 170) rotate(-38)"/>
<use href="#camera" transform="translate(820 168) rotate(218)"/>
<use href="#camera" transform="translate(820 870) rotate(142)"/>
<use href="#camera" transform="translate(68 955) rotate(40)"/>
<!-- doors -->
<use href="#door" transform="translate(150 210)"/>
<use href="#door" transform="translate(505 686)"/>
<use href="#door" transform="translate(298 936)"/>
<!-- motion -->
<use href="#motion" x="414" y="260" width="60" height="60" fill="#44739e"/>
<use href="#motion" x="714" y="260" width="60" height="60" fill="#44739e"/>
<use href="#motion" x="260" y="946" width="60" height="60" fill="#44739e"/>
<!-- lights -->
<circle cx="107" cy="425" r="40" fill="#fff7c2" opacity=".45"/><circle cx="107" cy="425" r="28" fill="none" stroke="#f2d96a" stroke-width="3" stroke-dasharray="2 5"/>
<circle cx="443" cy="365" r="50" fill="#fff7c2" opacity=".35"/><circle cx="443" cy="365" r="30" fill="none" stroke="#f2d96a" stroke-width="3" stroke-dasharray="2 5"/>
<use href="#bulb" x="82" y="400" width="50" height="50" fill="#ffe600"/>
<use href="#bulb" x="418" y="340" width="50" height="50" fill="#ffe600"/>
<use href="#bulb" x="660" y="605" width="50" height="50" fill="#9a9084"/>
<use href="#bulb" x="160" y="928" width="50" height="50" fill="#9a9084"/>
<!-- thermostats -->
<rect x="398" y="406" width="92" height="92" rx="26" fill="url(#tg)"/>
<text x="405" y="462" lengthAdjust="spacingAndGlyphs" textLength="78" style="font-size:29px;fill:#fff">21 °C</text>
<rect x="389" y="778" width="92" height="92" rx="26" fill="url(#tg)"/>
<text x="396" y="834" lengthAdjust="spacingAndGlyphs" textLength="78" style="font-size:29px;fill:#fff">23 °C</text>
<!-- garage -->
<circle cx="681" cy="765" r="29" fill="#1aa630"/><circle cx="681" cy="765" r="21" fill="#fff"/><path d="M665,783V757L681,746L697,757V783Z" fill="#1aa630"/><path d="M670,762H692M670,769H692M670,776H692" stroke="#fff" stroke-width="1.500"/>
<!-- ceiling light -->
<g fill="none" stroke="#333" stroke-width="2.500"><path d="M699,862A21,20 0 0 1 741,862Z"/><path d="M703,862A17,17 0 0 0 737,862"/><path d="M720,842V836"/></g>
</g>

<!-- media -->
<g clip-path="url(#mc)">
<rect x="644" y="401" width="289" height="136" fill="#fdc002"/>
<g transform="translate(640 395) scale(.33333)">
<path d="M470,345C540,332 620,345 700,372L740,425H470Z" fill="url(#sg)"/>
<path d="M640,430L712,335C740,300 790,275 830,262L880,290V430Z" fill="#6b5a30"/>
<path d="M795,345L880,310V430H800Z" fill="url(#dots)"/>
<path d="M692,200C688,215 682,225 690,235C695,250 695,270 702,280L740,292L800,265L825,250L830,190L760,150Z" fill="#a88a35"/>
<path d="M680,172C690,130 755,115 800,122C835,135 848,175 842,225L830,262L812,240L806,205L780,210L770,175L735,160L700,168Z" fill="#7d6731"/>
<path d="M745,285L815,240L830,262L760,305Z" fill="#544320"/>
<text x="527" y="95" lengthAdjust="spacingAndGlyphs" textLength="280" style="font-size:62px;font-weight:bold;font-style:italic;fill:#6f5a18">easy rider</text>
<circle cx="812" cy="68" r="7" fill="#5b4a14"/><circle cx="812" cy="96" r="7" fill="#5b4a14"/>
<text x="575" y="34" lengthAdjust="spacingAndGlyphs" textLength="190" style="font-size:11px;font-weight:bold;fill:#de8a12">MUSIC FROM AND INSPIRED BY</text>
<text x="525" y="112" lengthAdjust="spacingAndGlyphs" textLength="125" style="font-size:15px;fill:#c49a0e">PETER FONDA</text>
<text x="525" y="130" lengthAdjust="spacingAndGlyphs" textLength="142" style="font-size:15px;fill:#c49a0e">DENNIS HOPPER</text>
<text x="525" y="148" lengthAdjust="spacingAndGlyphs" textLength="152" style="font-size:15px;fill:#c49a0e">JACK NICHOLSON</text>
</g>
</g>
<use href="#cast" x="657" y="413.500" width="23" height="23" fill="#453a1c"/>
<text class="m" x="686" y="429" lengthAdjust="spacingAndGlyphs" textLength="69">Family Room</text>
<text class="m" x="658" y="462.500" lengthAdjust="spacingAndGlyphs" textLength="149" style="font-size:14.500px">I Wasn't Born To Follow</text>
<text class="m" x="658" y="482" lengthAdjust="spacingAndGlyphs" textLength="53">The Byrds</text>
<use href="#prev" x="652.500" y="502" width="26" height="26" fill="#453a1c"/>
<use href="#pause" x="687" y="498" width="34" height="34" fill="#453a1c"/>
<use href="#next" x="729.500" y="502" width="26" height="26" fill="#453a1c"/>

<!-- entertainment -->
<text class="t" x="658" y="583.500" lengthAdjust="spacingAndGlyphs" textLength="127">Entertainment</text>
<circle cx="675" cy="621" r="17" fill="url(#hg)"/>
<text x="661" y="623" lengthAdjust="spacingAndGlyphs" textLength="29" style="font-size:7px;fill:#cfeee8">Harmony</text>
<text x="706" y="625" lengthAdjust="spacingAndGlyphs" textLength="49">Harmony</text>
<text x="871" y="625" lengthAdjust="spacingAndGlyphs" textLength="47">YouTube</text>
<g>
<path d="M692.500,693.500V648.500A3,3 0 0 1 695.500,645.500H915A3,3 0 0 1 918,648.500V693.500Z" fill="#f5f5f5"/><rect x="692.500" y="692.500" width="225.500" height="1.300" fill="#a8a8a8"/>
<path d="M692.500,748.500V703.500A3,3 0 0 1 695.500,700.500H915A3,3 0 0 1 918,703.500V748.500Z" fill="#f5f5f5"/><rect x="692.500" y="747.500" width="225.500" height="1.300" fill="#a8a8a8"/>
<path d="M692.500,803.500V758.500A3,3 0 0 1 695.500,755.500H915A3,3 0 0 1 918,758.500V803.500Z" fill="#f5f5f5"/><rect x="692.500" y="802.500" width="225.500" height="1.300" fill="#a8a8a8"/>
<path d="M893,667H902.500L897.700,672Z" fill="#757575"/><path d="M893,722H902.500L897.700,727Z" fill="#757575"/><path d="M893,777H902.500L897.700,782Z" fill="#757575"/>
</g>
<use href="#remote" x="663.500" y="658" width="23" height="23" fill="#44739e"/>
<use href="#remote" x="663.500" y="713" width="23" height="23" fill="#44739e"/>
<use href="#remote" x="663.500" y="768" width="23" height="23" fill="#44739e"/>
<text x="703" y="665" lengthAdjust="spacingAndGlyphs" textLength="30" style="font-size:9.500px;fill:#8a8a8a">Activity</text>
<text x="703" y="679.500" lengthAdjust="spacingAndGlyphs" textLength="47" style="fill:#2b2b2b">YouTube</text>
<text x="703" y="720" lengthAdjust="spacingAndGlyphs" textLength="61" style="font-size:9.500px;fill:#8a8a8a">HDMI Switcher</text>
<text x="703" y="735" lengthAdjust="spacingAndGlyphs" textLength="33" style="fill:#2b2b2b">Shield</text>
<text x="703" y="775" lengthAdjust="spacingAndGlyphs" textLength="46" style="font-size:9.500px;fill:#8a8a8a">HDMI Input</text>
<text x="703" y="790" lengthAdjust="spacingAndGlyphs" textLength="64" style="fill:#2b2b2b">InputHdmi4</text>
<use href="#vol" x="662.500" y="814.700" width="26" height="26" fill="#44739e"/>
<text x="706" y="832" lengthAdjust="spacingAndGlyphs" textLength="41">Volume</text>
<rect x="826" y="827.300" width="40" height="1.400" fill="#bdbdbd"/><rect x="826" y="827.300" width="6" height="1.400" fill="#0ba8f5"/><circle cx="831.700" cy="828" r="5" fill="#0ba8f5"/>
<text x="905" y="832" lengthAdjust="spacingAndGlyphs" textLength="13">18</text>
<use href="#chart" x="665" y="859" width="21" height="21" fill="#44739e"/>
<text x="706" y="873" lengthAdjust="spacingAndGlyphs" textLength="75">Total TV Time</text>
<text x="885" y="873" lengthAdjust="spacingAndGlyphs" textLength="33">0.42 h</text>
<use href="#script" x="664.500" y="899.500" width="21" height="21" fill="#44739e"/>
<text x="706" y="914" lengthAdjust="spacingAndGlyphs" textLength="99">Turn Television off</text>
<text class="b" x="885" y="914" textLength="23">RUN</text>

<!-- information -->
<text class="t" x="954" y="94" lengthAdjust="spacingAndGlyphs" textLength="104">Information</text>
<use href="#car" x="960.500" y="122.500" width="21" height="21" fill="#44739e"/>
<use href="#car" x="960.500" y="163.500" width="21" height="21" fill="#44739e"/>
<use href="#eye" x="960.500" y="204.500" width="21" height="21" fill="#44739e"/>
<use href="#usd" x="960.500" y="246" width="21" height="21" fill="#44739e"/>
<text x="1002" y="136" lengthAdjust="spacingAndGlyphs" textLength="100">Morning Commute</text>
<text x="1002" y="177" lengthAdjust="spacingAndGlyphs" textLength="102">Commute to Home</text>
<text x="1002" y="219" lengthAdjust="spacingAndGlyphs" textLength="42">PlexSpy</text>
<text x="1002" y="260" lengthAdjust="spacingAndGlyphs" textLength="42">USDINR</text>
<text x="1177" y="136" lengthAdjust="spacingAndGlyphs" textLength="37">37 min</text>
<text x="1177" y="177" lengthAdjust="spacingAndGlyphs" textLength="37">41 min</text>
<text x="1154" y="219" lengthAdjust="spacingAndGlyphs" textLength="60">0 Watching</text>
<text x="1162" y="260" lengthAdjust="spacingAndGlyphs" textLength="52">71.25 INR</text>

<!-- security -->
<text class="t" x="954" y="333.500" lengthAdjust="spacingAndGlyphs" textLength="72">Security</text>
<rect x="1129" y="313.500" width="100" height="27" rx="13.500" fill="#0f9d38"/>
<use href="#shield" x="1137" y="319" width="15" height="15" fill="#fff"/>
<path d="M1137,320L1151,334" stroke="#0f9d38" stroke-width="1.500"/>
<text x="1157" y="331" lengthAdjust="spacingAndGlyphs" textLength="46" style="font-size:11.500px;fill:#e8f6ea">Disarmed</text>
<rect x="991.500" y="361.500" width="89" height="29.500" rx="3" fill="#fff" stroke="#e0e0e0"/>
<rect x="1088.500" y="361.500" width="88" height="29.500" rx="3" fill="#fff" stroke="#e0e0e0"/>
<text class="b" x="1005" y="380" textLength="62">ARM HOME</text>
<text class="b" x="1102" y="380" textLength="60">ARM AWAY</text>
</svg>
</body></html>
